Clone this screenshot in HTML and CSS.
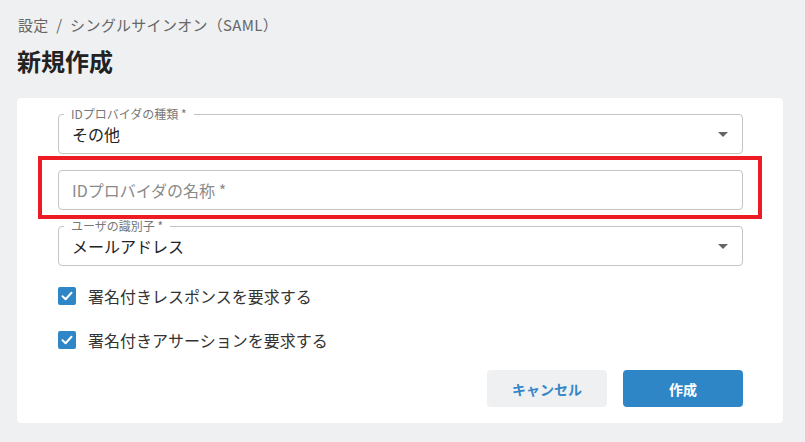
FILE: index.html
```html
<!DOCTYPE html>
<html lang="ja">
<head>
  <meta charset="UTF-8" />
  <meta name="viewport" content="width=device-width, initial-scale=1.0" />
  <title>新規作成</title>
  <link rel="stylesheet" href="styles.css">
</head>
<body>
  <div class="page">
    <div class="breadcrumb">設定 <span class="sep">/</span> シングルサインオン（SAML）</div>
    <h1>新規作成</h1>

    <div class="card">
      <div class="fields">
        <div class="field">
          <span class="field-label">IDプロバイダの種類 *</span>
          <span class="field-value">その他</span>
          <span class="arrow"></span>
        </div>

        <div class="field highlighted">
          <span class="field-placeholder">IDプロバイダの名称 *</span>
        </div>

        <div class="field">
          <span class="field-label">ユーザの識別子 *</span>
          <span class="field-value">メールアドレス</span>
          <span class="arrow"></span>
        </div>
      </div>

      <div class="checks">
        <label class="check-row">
          <span class="checkbox">
            <svg width="12" height="10" viewBox="0 0 12 10"><path d="M1.5 5.2 L4.6 8.2 L10.5 1.8" fill="none" stroke="#fff" stroke-width="2" stroke-linecap="round" stroke-linejoin="round"/></svg>
          </span>
          署名付きレスポンスを要求する
        </label>
        <label class="check-row">
          <span class="checkbox">
            <svg width="12" height="10" viewBox="0 0 12 10"><path d="M1.5 5.2 L4.6 8.2 L10.5 1.8" fill="none" stroke="#fff" stroke-width="2" stroke-linecap="round" stroke-linejoin="round"/></svg>
          </span>
          署名付きアサーションを要求する
        </label>
      </div>

      <div class="actions">
        <button class="btn btn-cancel">キャンセル</button>
        <button class="btn btn-primary">作成</button>
      </div>
    </div>
  </div>
</body>
</html>
```

FILE: styles.css
```css
body {
  margin: 0;
  padding: 0;
  background-color: #eff0f2;
  font-family: "Noto Sans CJK JP", "Noto Sans", sans-serif;
  color: #333;
}
.page {
  padding: 14px 22px 0 17px;
}
.breadcrumb {
  font-size: 15px;
  line-height: 21px;
  letter-spacing: 0.3px;
  color: #666;
  padding-left: 1px;
}
.breadcrumb .sep {
  margin: 0 4px;
}
h1 {
  margin: 10px 0 0 0;
  font-size: 24px;
  line-height: 32px;
  font-weight: bold;
  color: #222;
}
.card {
  margin-top: 21px;
  background-color: #fff;
  border-radius: 4px;
  padding: 16px 40px 16px 41px;
}
.fields {
  display: flex;
  flex-direction: column;
  gap: 16px;
}
.field {
  position: relative;
  height: 40px;
  box-sizing: border-box;
  border: 1px solid #c4c4c4;
  border-radius: 4px;
  display: flex;
  align-items: center;
  padding: 0 13px;
  font-size: 16px;
}
.field-label {
  position: absolute;
  left: 5px;
  top: -8px;
  padding: 0 7px 0 7px;
  background-color: #fff;
  font-size: 12px;
  line-height: 14px;
  color: #777;
}
.field-value {
  color: #222;
  line-height: 20px;
}
.field-placeholder {
  color: #8a8a8a;
  line-height: 20px;
}
.arrow {
  position: absolute;
  right: 14px;
  top: 17px;
  width: 0;
  height: 0;
  border-left: 5px solid transparent;
  border-right: 5px solid transparent;
  border-top: 5px solid #666;
}
/* red annotation frame round the name field */
.highlighted::after {
  content: "";
  position: absolute;
  left: -21px;
  right: -20px;
  top: -15px;
  bottom: -10px;
  border: 4px solid #ed1c24;
  pointer-events: none;
}
.checks {
  margin-top: 8px;
  display: flex;
  flex-direction: column;
}
.check-row {
  height: 44px;
  display: flex;
  align-items: center;
  gap: 12px;
  font-size: 16px;
  color: #333;
  cursor: pointer;
}
.checkbox {
  width: 18px;
  height: 18px;
  border-radius: 2px;
  background-color: #2e86c6;
  display: flex;
  align-items: center;
  justify-content: center;
}
.actions {
  margin-top: 8px;
  display: flex;
  justify-content: flex-end;
  gap: 16px;
}
.btn {
  width: 120px;
  height: 37px;
  border: none;
  border-radius: 4px;
  font-family: "Noto Sans CJK JP", "Noto Sans", sans-serif;
  font-size: 14px;
  font-weight: bold;
  cursor: pointer;
}
.btn-cancel {
  background-color: #eff0f2;
  color: #3586c6;
}
.btn-primary {
  background-color: #2e86c6;
  color: #fff;
}
```
